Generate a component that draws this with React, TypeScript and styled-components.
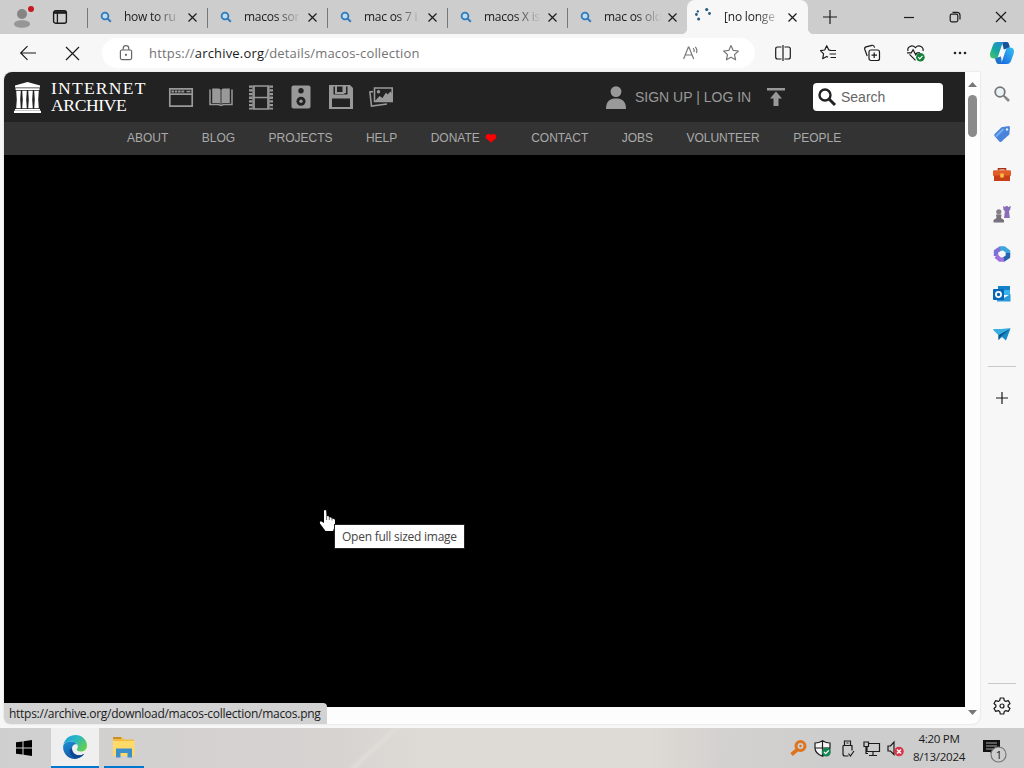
import React from 'react';
import styled, { createGlobalStyle, css } from 'styled-components';

const GlobalStyle = createGlobalStyle`
  * {
    box-sizing: border-box;
  }
  body {
    margin: 0;
    overflow: hidden;
    font-family: 'Open Sans', 'Noto Sans', sans-serif;
    font-size: 12px;
    color: #1b1b1b;
  }
`;

const Screen = styled.div`
  display: flex;
  flex-direction: column;
  width: 1024px;
  height: 768px;
  overflow: hidden;
  background: #f7f7f7;
`;

const Icon = styled.svg<{ $w?: number; $h?: number }>`
  display: block;
  flex: none;
  width: ${({ $w = 18 }) => $w}px;
  height: ${({ $w = 18, $h }) => $h || $w}px;
  fill: none;
  stroke: currentColor;
  stroke-width: 1.2;
  overflow: visible;
`;

const Cell = styled.div<{ $w: number; $h?: number }>`
  display: flex;
  flex: none;
  align-items: center;
  justify-content: center;
  width: ${({ $w }) => $w}px;
  height: ${({ $h }) => ($h ? `${$h}px` : '100%')};
`;

/* tab strip */

const TabStrip = styled.div`
  display: flex;
  flex: none;
  height: 34px;
  background: #cdcdcd;
`;

const TabTools = styled.div`
  display: flex;
  width: 87px;
`;

const Tab = styled.div<{ $active?: boolean }>`
  display: flex;
  flex: none;
  align-items: center;
  width: 120px;
  padding-left: 12px;
  position: relative;
  ${({ $active }) =>
    $active
      ? css`
          width: 121px;
          background: #f7f7f7;
          border-radius: 8px 8px 0 0;
          padding-left: 10px;
          &::before,
          &::after {
            content: '';
            position: absolute;
            bottom: 0;
            width: 6px;
            height: 6px;
          }
          &::before {
            left: -6px;
            background: radial-gradient(circle at 0 0, #cdcdcd 6px, #f7f7f7 6.5px);
          }
          &::after {
            right: -6px;
            background: radial-gradient(circle at 100% 0, #cdcdcd 6px, #f7f7f7 6.5px);
          }
        `
      : css`
          background: linear-gradient(#777, #777) 0 8px / 1px 20px no-repeat;
        `}
`;

const TabTitle = styled.span<{ $spacing?: number }>`
  flex: none;
  width: 58px;
  margin: 0 6px 0 11px;
  overflow: hidden;
  white-space: nowrap;
  line-height: 18px;
  letter-spacing: ${({ $spacing = 0 }) => $spacing}px;
  mask-image: linear-gradient(to right, #000 32px, transparent 57px);
`;

const Spacer = styled.div`
  flex: 1;
`;

/* toolbar */

const Toolbar = styled.div`
  display: flex;
  flex: none;
  align-items: center;
  height: 38px;
  padding-left: 6px;
`;

const AddressBar = styled.div`
  display: flex;
  align-items: center;
  width: 653px;
  height: 30px;
  margin: 0 6px 0 8px;
  padding: 0 3px 0 17px;
  border-radius: 15px;
  background: #fff;
`;

const Url = styled.div`
  flex: 1;
  margin-left: 16px;
  color: #737373;
  font-size: 13px;
  letter-spacing: 0.18px;
  white-space: nowrap;
  b {
    color: #1b1b1b;
    font-weight: 400;
  }
`;

/* page */

const Main = styled.div`
  display: flex;
  flex: none;
  height: 656px;
  padding-left: 4px;
`;

const Viewport = styled.div`
  display: flex;
  position: relative;
  width: 976px;
  height: 652px;
  border-radius: 8px 0 8px 6px;
  overflow: hidden;
  background: #fdfdfd;
  box-shadow: 0 0 2px #ccc;
`;

const Page = styled.div`
  width: 961px;
  font-family: 'Liberation Sans', Arial, sans-serif;
`;

const ArchiveHeader = styled.div`
  display: flex;
  align-items: center;
  height: 50px;
  padding-left: 10px;
  background: #222;
  color: #999;
`;

const Wordmark = styled.div`
  width: 110px;
  margin: 0 0 0 10px;
  color: #fff;
  font-family: 'Liberation Serif', serif;
  font-size: 17.6px;
  line-height: 17px;
`;

const WordmarkLine = styled.div<{ $spacing: number }>`
  letter-spacing: ${({ $spacing }) => $spacing}px;
`;

const MediaIcons = styled.div`
  display: flex;
  height: 50px;
`;

const SignIn = styled.div`
  width: 117px;
  margin-left: 9px;
  font-size: 14px;
  white-space: nowrap;
`;

const SearchBox = styled.div`
  display: flex;
  align-items: center;
  gap: 5px;
  width: 130px;
  height: 28px;
  margin-left: 28px;
  padding-left: 5px;
  border-radius: 4px;
  background: #fff;
  color: #666;
  font-size: 14px;
`;

const SubNav = styled.nav`
  display: flex;
  align-items: center;
  gap: 33.4px;
  height: 33px;
  padding: 0 0 2px 123px;
  background: #333;
  color: #aaa;
  font-size: 12px;
`;

const NavLink = styled.span`
  display: flex;
  align-items: center;
  gap: 5px;
`;

const ImageArea = styled.div`
  height: 552px;
  background: #000;
`;

const Scrollbar = styled.div`
  display: flex;
  flex-direction: column;
  align-items: center;
  width: 15px;
  padding: 10px 0 9px;
`;

const Thumb = styled.div`
  width: 9px;
  height: 42px;
  margin-top: 8px;
  border-radius: 5px;
  background: #8b8b8b;
`;

const StatusBubble = styled.div`
  position: absolute;
  left: 0;
  bottom: 0;
  width: 323px;
  height: 21px;
  padding-left: 5px;
  border-radius: 0 4px 0 6px;
  background: #d2d2d2;
  line-height: 22px;
  white-space: nowrap;
  letter-spacing: -0.27px;
`;

const Tooltip = styled.div`
  position: absolute;
  left: 330px;
  top: 452px;
  width: 131px;
  height: 25px;
  padding-left: 7px;
  border: 1px solid #222;
  background: #fff;
  color: #444;
  line-height: 23px;
  white-space: nowrap;
  letter-spacing: -0.25px;
`;

const Pointer = styled.div`
  position: absolute;
  left: 315px;
  top: 437px;
`;

const Sidebar = styled.div`
  display: flex;
  flex-direction: column;
  align-items: center;
  width: 44px;
  padding-top: 2px;
`;

const Divider = styled.div<{ $margin: string }>`
  width: 28px;
  height: 1px;
  margin: ${({ $margin }) => $margin};
  background: #c8c8c8;
`;

/* taskbar */

const Taskbar = styled.div`
  display: flex;
  flex: none;
  height: 40px;
  background:
    linear-gradient(125deg, transparent 40%, #cfd0d070 48%, transparent 56%) 640px 0 / 200px 40px no-repeat,
    linear-gradient(137deg, transparent 44%, #e0ddd9 50%, transparent 56%) 340px 0 / 70px 40px no-repeat,
    linear-gradient(90deg, #cfcfcf 0, #d3d1d0 170px, #d7d3d1 340px, #dedad5 420px, #dedad5 650px, #d4d2d0 720px, #cdcdcd 830px, #cdcdcd 100%);
`;

const TaskButton = styled.div<{ $w: number; $active?: boolean }>`
  display: flex;
  align-items: center;
  justify-content: center;
  width: ${({ $w }) => $w}px;
  margin-right: 5px;
  border-bottom: 2px solid #0078d0;
  background: ${({ $active }) => ($active ? '#f0efef' : 'transparent')};
`;

const Clock = styled.div`
  width: 62px;
  padding-top: 2px;
  text-align: center;
  font-size: 11.6px;
  line-height: 18px;
  letter-spacing: -0.3px;
  white-space: nowrap;
`;

const CloseIcon = () => (
  <Icon $w={9} viewBox="0 0 9 9" strokeWidth="1.3">
    <path d="M.5.5l8 8M8.5.5l-8 8" />
  </Icon>
);

const FaviconSearch = () => (
  <Icon $w={14} viewBox="0 0 14 14" style={{ color: '#2f79b9' }}>
    <circle cx="6" cy="6" r="3.4" strokeWidth="1.8" fill="#bcdcf2" />
    <path d="M8.6 8.6l3.2 3.2" strokeWidth="2" />
  </Icon>
);

const tabs = ['how to ru', 'macos sor', 'mac os 7 i', 'macos X is', 'mac os old'];

const TabBar = () => (
  <TabStrip>
    <TabTools>
      <Cell $w={44}>
        <Icon $w={20} $h={24} viewBox="0 0 20 24" stroke="none">
          <circle cx="10" cy="9" r="5" fill="#858585" stroke="none" />
          <path d="M2 19c0-5 16-5 16 0 0 5-16 5-16 0z" fill="#969696" stroke="none" />
          <circle cx="19" cy="4" r="3" fill="#c71920" stroke="none" />
        </Icon>
      </Cell>
      <Cell $w={32}>
        <Icon $w={14} viewBox="0 0 14 14">
          <rect x=".6" y=".8" width="12.8" height="12.4" rx="2" strokeWidth="1.4" />
          <path d="M1 2.5h12" strokeWidth="2.6" />
          <path d="M4.4 3v10" strokeWidth="1.3" />
        </Icon>
      </Cell>
    </TabTools>
    {tabs.map((title) => (
      <Tab key={title}>
        <FaviconSearch />
        <TabTitle $spacing={-0.25}>{title}</TabTitle>
        <CloseIcon />
      </Tab>
    ))}
    <Tab $active>
      <Icon $w={16} viewBox="0 0 16 16">
        <g fill="#245b83" stroke="none">
          <circle cx="-.6" cy="5.500" r="1.400" />
          <circle cx=".8" cy="2.400" r="1.200" />
          <circle cx="1.600" cy="10" r="1.500" />
          <circle cx="9.700" cy=".5" r="1.600" />
          <circle cx="12.500" cy="4.500" r="1.400" />
        </g>
      </Icon>
      <TabTitle $spacing={-0.2}>[no longe</TabTitle>
      <CloseIcon />
    </Tab>
    <Cell $w={43}>
      <Icon $w={14} viewBox="0 0 14 14">
        <path d="M7 0v14M0 7h14" />
      </Icon>
    </Cell>
    <Spacer />
    <Cell $w={46}>
      <Icon $w={10} viewBox="0 0 10 10">
        <path d="M0 5.5h10" />
      </Icon>
    </Cell>
    <Cell $w={46}>
      <Icon $w={10} viewBox="0 0 10 10">
        <rect x=".2" y="2.2" width="7.6" height="7.6" rx="1.5" />
        <path d="M2.5.3H7a3 3 0 013 3v4.2" />
      </Icon>
    </Cell>
    <Cell $w={46}>
      <Icon $w={10} viewBox="0 0 10 10">
        <path d="M0 0l10 10M10 0L0 10" />
      </Icon>
    </Cell>
  </TabStrip>
);

const BrowserToolbar = () => (
  <Toolbar>
    <Cell $w={44}>
      <Icon $w={16} viewBox="0 0 16 16">
        <path d="M16 8H.8M7.5 1.2L.7 8l6.8 6.8" />
      </Icon>
    </Cell>
    <Cell $w={44}>
      <Icon $w={13} viewBox="0 0 13 13">
        <path d="M0 0l13 13M13 0L0 13" />
      </Icon>
    </Cell>
    <AddressBar>
      <Icon $w={14} $h={16} viewBox="0 0 14 16" style={{ color: '#666' }}>
        <rect x="1.4" y="5" width="11.2" height="9.6" rx="1.5" />
        <path d="M4.2 5V3.4a2.8 2.8 0 015.6 0V5" />
        <circle cx="7" cy="9.8" r=".5" fill="currentColor" />
      </Icon>
      <Url>
        https://<b>archive.org</b>/details/macos-collection
      </Url>
      <Cell $w={38}>
        <Icon $w={16} viewBox="0 0 16 16" style={{ color: '#777' }}>
          <path d="M.6 14L5.4 2h.5l4.8 12M2.2 10h7M10.2 3.2q1.5 1.6.7 3.8M12.2 1.8q2.6 2.6 1.2 6.2" />
        </Icon>
      </Cell>
      <Cell $w={42}>
        <Icon $w={16} viewBox="0 0 16 16" style={{ color: '#777' }}>
          <path
            d="M8 .6l2.2 4.8 5.2.6-3.9 3.6 1.1 5.2L8 12.3l-4.600 2.500 1.100-5.200L.6 6l5.200-.6z"
            strokeLinejoin="round"
          />
        </Icon>
      </Cell>
    </AddressBar>
    <Cell $w={44}>
      <Icon $w={16} viewBox="0 0 16 16">
        <path d="M6.5 2H2.6Q.7 2 .7 4v8q0 2 1.9 2h3.9M9.5 2h3.9q1.9 0 1.9 2v8q0 2-1.9 2H9.5M8 0v16" />
      </Icon>
    </Cell>
    <Cell $w={45}>
      <Icon $w={16} viewBox="0 0 16 16">
        <path
          d="M10.4 5.2L8.8 5 6.7.7 4.7 5 .5 5.6l3.1 3.2-.9 4.9 3.9-2.3 1.4.8M9.5 5.5H16M9.5 9H16M10.5 12.5H16"
          strokeLinejoin="round"
        />
      </Icon>
    </Cell>
    <Cell $w={44}>
      <Icon $w={16} viewBox="0 0 16 16">
        <rect x="5" y="5" width="10.5" height="10.5" rx="2" />
        <path d="M10.2 7.5v5.5M7.5 10.2H13M3.2 11L.8 4.5Q.2 2.5 2 1.9L8 .3q2-.4 2.6 2.4" />
      </Icon>
    </Cell>
    <Cell $w={44}>
      <Icon $w={18} $h={17} viewBox="0 0 18 17">
        <path d="M1 6C-.2 1.8 5-.8 8.4 2.6 12-1 17 2 16 6M2.5 9.3l6 6M0 7.8h4.3l1.8-3 2.6 5 1.3-2H13" />
        <circle cx="13.4" cy="12.2" r="4.3" fill="#15803a" stroke="none" />
        <path d="M11.3 12.2l1.5 1.6 2.7-3" stroke="#fff" />
      </Icon>
    </Cell>
    <Cell $w={44}>
      <Icon $w={14} $h={4} viewBox="0 0 14 4">
        <g fill="#222" stroke="none">
          <circle cx="2" cy="2" r="1.3" />
          <circle cx="7" cy="2" r="1.3" />
          <circle cx="12" cy="2" r="1.3" />
        </g>
      </Icon>
    </Cell>
    <Cell $w={40}>
      <Icon $w={24} viewBox="0 0 24 24">
        <defs>
          <linearGradient id="copilotLeft" x1="0" y1="1" x2=".8" y2="0">
            <stop offset="0" stopColor="#4cc85f" />
            <stop offset=".5" stopColor="#18a6a0" />
            <stop offset="1" stopColor="#1f8fd0" />
          </linearGradient>
          <linearGradient id="copilotRight" x1="1" y1="0" x2="0" y2="1">
            <stop offset="0" stopColor="#35c3f4" />
            <stop offset="1" stopColor="#1663e0" />
          </linearGradient>
        </defs>
        <path d="M12 1h4.500c2.200 0 2.600 2 3.300 5.500l-6 2z" fill="#15539b" stroke="none" />
        <path d="M12 23H9c-2.600 0-3-2-4-6l6-1.500z" fill="#1d74c9" stroke="none" />
        <path
          d="M7 1h7c-1.500 1-2 2.500-2.600 4.500L8.200 15c-.6 1.700-1.600 2.500-3.200 2.500H4c-3.600 0-4.600-2.800-3.700-6L3 4c.8-2 2-3 4-3z"
          fill="url(#copilotLeft)"
          stroke="none"
        />
        <path
          d="M17 23h-7c1.500-1 2-2.500 2.600-4.500L15.800 9c.6-1.700 1.600-2.500 3.200-2.500h1c3.600 0 4.600 2.800 3.700 6L21 20c-.8 2-2 3-4 3z"
          fill="url(#copilotRight)"
          stroke="none"
        />
      </Icon>
    </Cell>
  </Toolbar>
);

const mediaIcons = [
  <Icon key="web" $w={24} $h={19} viewBox="0 0 24 19">
    <path d="M.8.8h22.400v17.400H.8zM.8 6.200h22.400" strokeWidth="1.700" />
    <path d="M2.500 3.400h13.500" strokeWidth="2" strokeDasharray="2.500 .8" />
    <path d="M17.500 3.400h4" strokeWidth="1.500" />
  </Icon>,
  <Icon key="texts" $w={24} $h={18} viewBox="0 0 24 18">
    <path
      d="M3.200.5h5.800q2 0 2.600 1.200V16q-1-1-2.600-1H3.200zM20.800.5H15q-2 0-2.600 1.200V16q1-1 2.600-1h5.800z"
      fill="currentColor"
      stroke="none"
    />
    <path d="M1 1.500v15h8.500l2.500 1 2.500-1H23v-15" strokeWidth="1.500" />
  </Icon>,
  <Icon key="video" $w={24} $h={25} viewBox="0 0 24 25">
    <path d="M5 1h14v23H5zM5 12.500h14" strokeWidth="1.700" />
    <path d="M1.800.5v24M22.200.5v24" strokeWidth="3.600" strokeDasharray="2.300 1.400" />
    <path d="M4 .5v24M20 .5v24" />
  </Icon>,
  <Icon key="audio" $w={20} $h={24} viewBox="0 0 20 24">
    <rect x=".5" y=".5" width="19" height="23" rx="2" fill="currentColor" stroke="none" />
    <circle cx="10" cy="5.800" r="2.700" fill="#222" stroke="none" />
    <circle cx="10" cy="16.200" r="4.500" fill="#222" stroke="none" />
    <circle cx="10" cy="16.200" r="1.700" fill="currentColor" stroke="none" />
  </Icon>,
  <Icon key="software" $w={24} viewBox="0 0 24 24">
    <path
      d="M0 0h21l3 3v21H0zM4.500 1.500v8h14v-8zM3 13.500V22h18v-8.500z"
      fill="currentColor"
      fillRule="evenodd"
      stroke="none"
    />
    <path d="M7 0v8h7.500V0M16 1v7" strokeWidth="2" />
  </Icon>,
  <Icon key="images" $w={24} $h={20} viewBox="0 0 24 20">
    <path d="M5.500 1h17.700v13.500H5.500zM4 4.600L.9 5l1.600 14 15.500-2" strokeWidth="1.600" />
    <circle cx="9.500" cy="4.700" r="1.700" fill="currentColor" stroke="none" />
    <path d="M6 14l4.500-5 3 2 3.500-5.500 1.500 2 3-3 1.500 2v7.500z" fill="currentColor" stroke="none" />
  </Icon>,
];

const navLinks = ['ABOUT', 'BLOG', 'PROJECTS', 'HELP', 'DONATE', 'CONTACT', 'JOBS', 'VOLUNTEER', 'PEOPLE'];

const ArchivePage = () => (
  <Page>
    <ArchiveHeader>
      <Icon $w={27} $h={31} viewBox="0 0 27 31">
        <g fill="#fff" stroke="none">
          <path d="M13.500 0L26 3.600v1.800H1V3.600zM1.500 6.300h24V8h-24zM1 27h25v1.400H1zM0 28.800h27V31H0z" />
          <path d="M2.200 8.700h4.600l-.6 9 .6 8.600H2.200l.6-8.600zM8.200 8.700h4.600l-.6 9 .6 8.600H8.200l.6-8.600zM14.200 8.700h4.600l-.6 9 .6 8.600h-4.600l.6-8.600zM20.200 8.700h4.600l-.6 9 .6 8.600h-4.600l.6-8.600z" />
        </g>
      </Icon>
      <Wordmark>
        <WordmarkLine $spacing={1.2}>INTERNET</WordmarkLine>
        <WordmarkLine $spacing={-0.4}>ARCHIVE</WordmarkLine>
      </Wordmark>
      <MediaIcons>
        {mediaIcons.map((icon) => (
          <Cell $w={40} key={icon.key}>
            {icon}
          </Cell>
        ))}
      </MediaIcons>
      <Spacer />
      <Icon $w={20} $h={23} viewBox="0 0 20 23">
        <path d="M0 23c0-8 4-10.500 10-10.500S20 15 20 23z" fill="#999" stroke="none" />
        <circle cx="10" cy="5.600" r="5.400" fill="#999" stroke="none" />
      </Icon>
      <SignIn>SIGN UP | LOG IN</SignIn>
      <Icon $w={18} viewBox="0 0 18 18" style={{ marginLeft: 15 }}>
        <path d="M0 0h18v2.500H0zM9 3.500l6 7h-3.500V18h-5v-7.500H3z" fill="#999" stroke="none" />
      </Icon>
      <SearchBox>
        <Icon $w={18} viewBox="0 0 18 18" style={{ color: '#222' }}>
          <circle cx="7" cy="7" r="5.500" strokeWidth="2.400" />
          <path d="M11 11l6 6" strokeWidth="3" />
        </Icon>
        Search
      </SearchBox>
      <Cell $w={22} />
    </ArchiveHeader>
    <SubNav>
      {navLinks.map((link) => (
        <NavLink key={link}>
          {link}
          {link === 'DONATE' && (
            <Icon $w={13} $h={10} viewBox="0 0 13 10">
              <path d="M6 9.500L1.300 5.500C-.8 3 2.500-.8 6 1.800c3.500-2.600 6.800 1.200 4.700 3.700z" fill="#f00" stroke="none" />
            </Icon>
          )}
        </NavLink>
      ))}
    </SubNav>
    <ImageArea />
  </Page>
);

const sideIcons = [
  <Icon key="search" $w={16} viewBox="0 0 16 16">
    <circle cx="6" cy="6" r="4.800" stroke="#777" strokeWidth="1.800" fill="#e8f3f8" />
    <path d="M9.600 9.600l2.400 2.400" stroke="#777" strokeWidth="1.800" />
    <path d="M11.500 11.500l3.500 3.500" stroke="#888" strokeWidth="2.600" />
  </Icon>,
  <Icon key="shopping" $w={18} viewBox="0 0 18 18">
    <path
      d="M8.500 2.200L16 1l1 1.200-.7 7.300-8 7.200q-1 .7-2-.3L1.500 11q-.8-1 .2-2z"
      fill="#4a83dc"
      stroke="none"
    />
    <path d="M3 11.500L10.500 4" stroke="#74adf2" strokeWidth="2" />
    <circle cx="14" cy="4.500" r="1.200" fill="#d8edff" stroke="none" />
  </Icon>,
  <Icon key="tools" $w={18} viewBox="0 0 18 18">
    <path d="M5.500 5.500V3.800h7v1.700" stroke="#a83013" strokeWidth="1.600" />
    <rect y="5.300" width="18" height="6" rx="1.200" fill="#e25d28" stroke="none" />
    <path d="M1 10.500h16V16H1z" fill="#c83e16" stroke="none" />
    <path d="M7.300 8.500h3.400v4H7.300z" fill="#ffc44d" stroke="none" />
  </Icon>,
  <Icon key="games" $w={18} viewBox="0 0 18 18">
    <path d="M10 1l2 1 1-1h1.500l1 1L18 1l-1 4-1 1 .8 7H11l.9-7L10.500 5z" fill="#8b6db8" stroke="none" />
    <circle cx="5.800" cy="6.800" r="2.600" fill="#858087" stroke="none" />
    <path d="M3 9.500h5.600L8 13l3 2v2.500H.5V15l3-2z" fill="#77727b" stroke="none" />
  </Icon>,
  <Icon key="m365" $w={18} viewBox="0 0 18 18">
    <path d="M3 11V6.500L8 3.200" stroke="#7d71d8" strokeWidth="4.400" />
    <path d="M7 3.400h4l4 3.100V10" stroke="#3da5dc" strokeWidth="4.400" />
    <path d="M15 8v3.500L10 15" stroke="#2b62ad" strokeWidth="4.400" />
    <path d="M11 14.600H7L3 11" stroke="#a071df" strokeWidth="4.400" />
  </Icon>,
  <Icon key="outlook" $w={18} viewBox="0 0 18 18">
    <path d="M5 1h12v9H5z" fill="#1681cb" stroke="none" />
    <path d="M11 5h6v5h-6z" fill="#35b5eb" stroke="none" />
    <path d="M4 16.500V9l7 4 6.500-4v7.500z" fill="#299bdd" stroke="none" />
    <rect y="4" width="11" height="11" rx="1" fill="#0965b5" stroke="none" />
    <circle cx="5.500" cy="9.500" r="2.600" stroke="#fff" strokeWidth="1.700" />
  </Icon>,
  <Icon key="drop" $w={18} viewBox="0 0 18 18">
    <path d="M0 4.500l17.500-1L13 15.500 9 12l-3.500 3v-5z" fill="#198ac7" stroke="none" />
    <path d="M5.500 10l12-6.500L8 11.500 5.500 15z" fill="#0f578d" stroke="none" />
    <path d="M0 4.500l17.500-1-12 6.500z" fill="#38afe1" stroke="none" />
  </Icon>,
];

const EdgeSidebar = () => (
  <Sidebar>
    {sideIcons.map((icon) => (
      <Cell $w={44} $h={40} key={icon.key}>
        {icon}
      </Cell>
    ))}
    <Divider $margin="12px 0 11px" />
    <Cell $w={43} $h={40}>
      <Icon $w={12} viewBox="0 0 12 12">
        <path d="M6 0v12M0 6h12" />
      </Icon>
    </Cell>
    <Spacer />
    <Divider $margin="0 0 1px" />
    <Cell $w={44} $h={42}>
      <Icon $w={18} viewBox="0 0 18 18">
        <path
          d="M7.300 1h3.400l.6 2.500 1.500.9 2.500-.8L17 6.500l-1.900 1.800v1.400l1.900 1.800-1.700 2.900-2.500-.8-1.500.9-.6 2.500H7.300l-.6-2.500-1.500-.9-2.500.8L1 11.500l1.900-1.800V8.300L1 6.500l1.700-2.900 2.500.8 1.500-.9z"
          strokeLinejoin="round"
        />
        <circle cx="9" cy="9" r="2" />
      </Icon>
    </Cell>
    <Cell $w={44} $h={1} />
  </Sidebar>
);

const trayIcons = [
  <Icon key="key" $w={17} viewBox="0 0 17 17" style={{ color: '#dc7420' }}>
    <circle cx="10.500" cy="6" r="4.500" strokeWidth="3" style={{ strokeWidth: 3 }} />
    <path d="M7.500 9.500L1.500 14.500" style={{ strokeWidth: 3.6 }} />
    <circle cx="10.500" cy="6" r="1.200" fill="#d96c18" stroke="none" />
  </Icon>,
  <Icon key="defender" $w={17} viewBox="0 0 17 17">
    <path
      d="M8.500.7Q5 3 1 3v5q0 5.500 7.500 8.300Q16 13.500 16 8V3q-4 0-7.500-2.300zM8.500 1v15M1 8h15"
      fill="#f5f5f5"
    />
    <circle cx="12.300" cy="12" r="4.500" fill="#168554" stroke="none" />
    <path d="M10 12l1.700 1.700 3-3.200" stroke="#fff" />
  </Icon>,
  <Icon key="usb" $w={13} $h={17} viewBox="0 0 13 17">
    <path d="M3.500 5.500V1h6v4.500M2 5.500h9v5M2 5.500V14q0 2 2 2h3.500M5.500 3h2M7.500 13.500L9.500 16l3.500-5" />
  </Icon>,
  <Icon key="network" $w={17} viewBox="0 0 17 17">
    <path d="M6 3.500h10.500v8H4V7M10 11.500v4M6 15.500h8M1 2h4.500v4.500H1zM3 6.500v7h2" />
  </Icon>,
  <Icon key="volume" $w={17} viewBox="0 0 17 17">
    <path d="M1 6h2.500L7 2v12.500L3.500 11H1z" />
    <circle cx="12" cy="11.500" r="4.800" fill="#d9364b" stroke="none" />
    <path d="M10 9.500l4 4M14 9.500l-4 4" stroke="#fff" strokeWidth="1.400" />
  </Icon>,
];

const WindowsTaskbar = () => (
  <Taskbar>
    <Cell $w={48}>
      <Icon $w={16} viewBox="0 0 16 16">
        <path
          d="M0 2.300l6.500-.9v6.100H0zM7.500 1.200L16 0v7.500H7.500zM0 8.500h6.500v6.100L0 13.700zM7.500 8.500H16V16l-8.500-1.200z"
          fill="#000"
          stroke="none"
        />
      </Icon>
    </Cell>
    <Cell $w={3} />
    <TaskButton $w={48} $active>
      <Icon $w={24} viewBox="0 0 24 24">
        <defs>
          <linearGradient id="edgeTop" x1="0" y1="0" x2="1" y2=".6">
            <stop offset="0" stopColor="#1f9be0" />
            <stop offset=".5" stopColor="#28b7c5" />
            <stop offset="1" stopColor="#61cf52" />
          </linearGradient>
          <linearGradient id="edgeSide" x1="0" y1="0" x2=".6" y2="1">
            <stop offset="0" stopColor="#1d91d7" />
            <stop offset="1" stopColor="#10509f" />
          </linearGradient>
        </defs>
        <path
          d="M.2 10C2 3.500 6.500 0 12.500 0 19 0 24 5 24 10.500c0 4-3 6-6.200 6-2.500 0-4-.9-4-2 0-.8 1-1 1-3C14.800 8 11 6.500 7.500 6.500 4 6.500 1.500 8 .2 10z"
          fill="url(#edgeTop)"
          stroke="none"
        />
        <path
          d="M.2 10.500C1.500 8 4 6.500 7.500 6.500c3 0 5.500 1.200 6.600 3-3-.8-5.100 1.200-5.100 4 0 4.500 4.500 8 9.500 6.500l2.800-1.200C19 22 15.600 24 12 24 5 24-.8 18 .2 10.500z"
          fill="url(#edgeSide)"
          stroke="none"
        />
        <path d="M9 13.500c0 5.500 6 9 12.300 5.300-2.800 3.700-7 4.900-10 4.200C6 20 5 14 9 13.500z" fill="#0d4792" stroke="none" />
      </Icon>
    </TaskButton>
    <TaskButton $w={40}>
      <Icon $w={24} $h={22} viewBox="0 0 24 22">
        <path d="M1 1h9l2 2.500h10V20H1z" fill="#f2bc42" stroke="none" />
        <path d="M1 5h21.500v15H1z" fill="#ffda69" stroke="none" />
        <path d="M1 1h8v2H1z" fill="#c7902c" stroke="none" />
        <path d="M4 21.500v-9h16v9h-4.500v-4.500h-7v4.500z" fill="#3d8fca" stroke="none" />
      </Icon>
    </TaskButton>
    <Spacer />
    {trayIcons.map((icon) => (
      <Cell $w={24.3} key={icon.key}>
        {icon}
      </Cell>
    ))}
    <Clock>
      4:20 PM
      <br />
      8/13/2024
    </Clock>
    <Cell $w={49}>
      <Icon $w={26} $h={24} viewBox="0 0 26 24">
        <path d="M1 4h17v12h-6v4l-4-4H1z" fill="#111" stroke="none" />
        <path d="M4 7h11M4 10h11M4 13h7" stroke="#aaa" strokeWidth="1" />
        <circle cx="16.500" cy="18.500" r="7.500" fill="#cdcdcd" stroke="#777" />
        <text x="13.700" y="22.500" fontSize="11" fill="#111" stroke="none">
          1
        </text>
      </Icon>
    </Cell>
    <Cell $w={5} />
  </Taskbar>
);

const App: React.FC = () => {
  return (
    <Screen>
      <GlobalStyle />
      <TabBar />
      <BrowserToolbar />
      <Main>
        <Viewport>
          <ArchivePage />
          <Scrollbar>
            <Icon $w={9} $h={5} viewBox="0 0 9 5">
              <path d="M0 5l4.500-5L9 5z" fill="#777" stroke="none" />
            </Icon>
            <Thumb />
            <Spacer />
            <Icon $w={9} $h={5} viewBox="0 0 9 5">
              <path d="M0 0h9L4.500 5z" fill="#777" stroke="none" />
            </Icon>
          </Scrollbar>
          <StatusBubble>https://archive.org/download/macos-collection/macos.png</StatusBubble>
          <Pointer>
            <Icon $w={17} $h={23} viewBox="0 0 17 23">
              <path
                d="M5 1.500q1.300-1.300 2.200.2L7.500 7l2.200.3.400 1 2.200.2.500.9 2.500.6.700 1.500v5L14 22H6.500L1 14.500q-.8-2 1-2.200L5 14z"
                fill="#fff"
                stroke="none"
              />
              <path d="M7.600 7v4M10.300 8v3M13 9v2.500" stroke="#333" strokeWidth=".7" />
            </Icon>
          </Pointer>
          <Tooltip>Open full sized image</Tooltip>
        </Viewport>
        <EdgeSidebar />
      </Main>
      <WindowsTaskbar />
    </Screen>
  );
};

export default App;
